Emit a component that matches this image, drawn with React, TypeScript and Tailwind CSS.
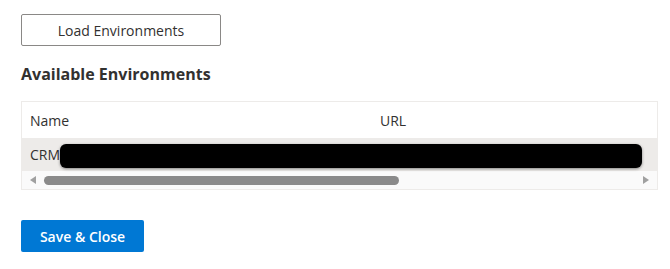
import { Fragment } from "react";

const font = { fontFamily: '"Segoe UI", "Open Sans", "Noto Sans", sans-serif' };

export default function App() {
  return (
    <div className="w-[670px] h-[269px] bg-white text-[#323130] overflow-hidden" style={font}>
      <div className="pl-[21px] pt-[14px]">
        {/* Load button */}
        <button className="w-[200px] h-[32px] border border-[#8a8886] rounded-[2px] bg-white text-[14px] text-[#323130] flex items-center justify-center">
          Load Environments
        </button>

        <h2 className="mt-[18px] text-[16px] font-bold leading-[20px] text-[#323130]">Available Environments</h2>

        {/* Environments grid */}
        <div className="mt-[17px] w-[637px] border border-[#edebe9] bg-white">
          <div className="h-[36px] flex items-center text-[14px] text-[#323130]">
            <div className="w-[358px] pl-[8px]">Name</div>
            <div>URL</div>
          </div>
          <div className="relative h-[33px] bg-[#edebe9] flex items-center text-[14px] text-[#323130]">
            <div className="pl-[8px]">CRM</div>
            <div className="absolute left-[38px] top-[6px] w-[582px] h-[24px] bg-black rounded-[6px] shadow-[0_1px_3px_rgba(0,0,0,0.45)]" />
          </div>
          <div className="h-[18px] bg-[#fafafa] flex items-center">
            <div className="w-[22px] flex items-center justify-center">
              <svg width="6" height="8" viewBox="0 0 6 8">
                <path d="M6 0 L0 4 L6 8 Z" fill="#a0a0a0" />
              </svg>
            </div>
            <div className="w-[355px] h-[9px] rounded-full bg-[#8a8a8a]" />
            <div className="flex-1" />
            <div className="w-[22px] flex items-center justify-center">
              <svg width="6" height="8" viewBox="0 0 6 8">
                <path d="M0 0 L6 4 L0 8 Z" fill="#a0a0a0" />
              </svg>
            </div>
          </div>
        </div>

        <Fragment>
          <button className="mt-[30px] w-[123px] h-[32px] bg-[#0078d4] rounded-[2px] text-white text-[14px] font-semibold flex items-center justify-center">
            Save &amp; Close
          </button>
        </Fragment>
      </div>
    </div>
  );
}
